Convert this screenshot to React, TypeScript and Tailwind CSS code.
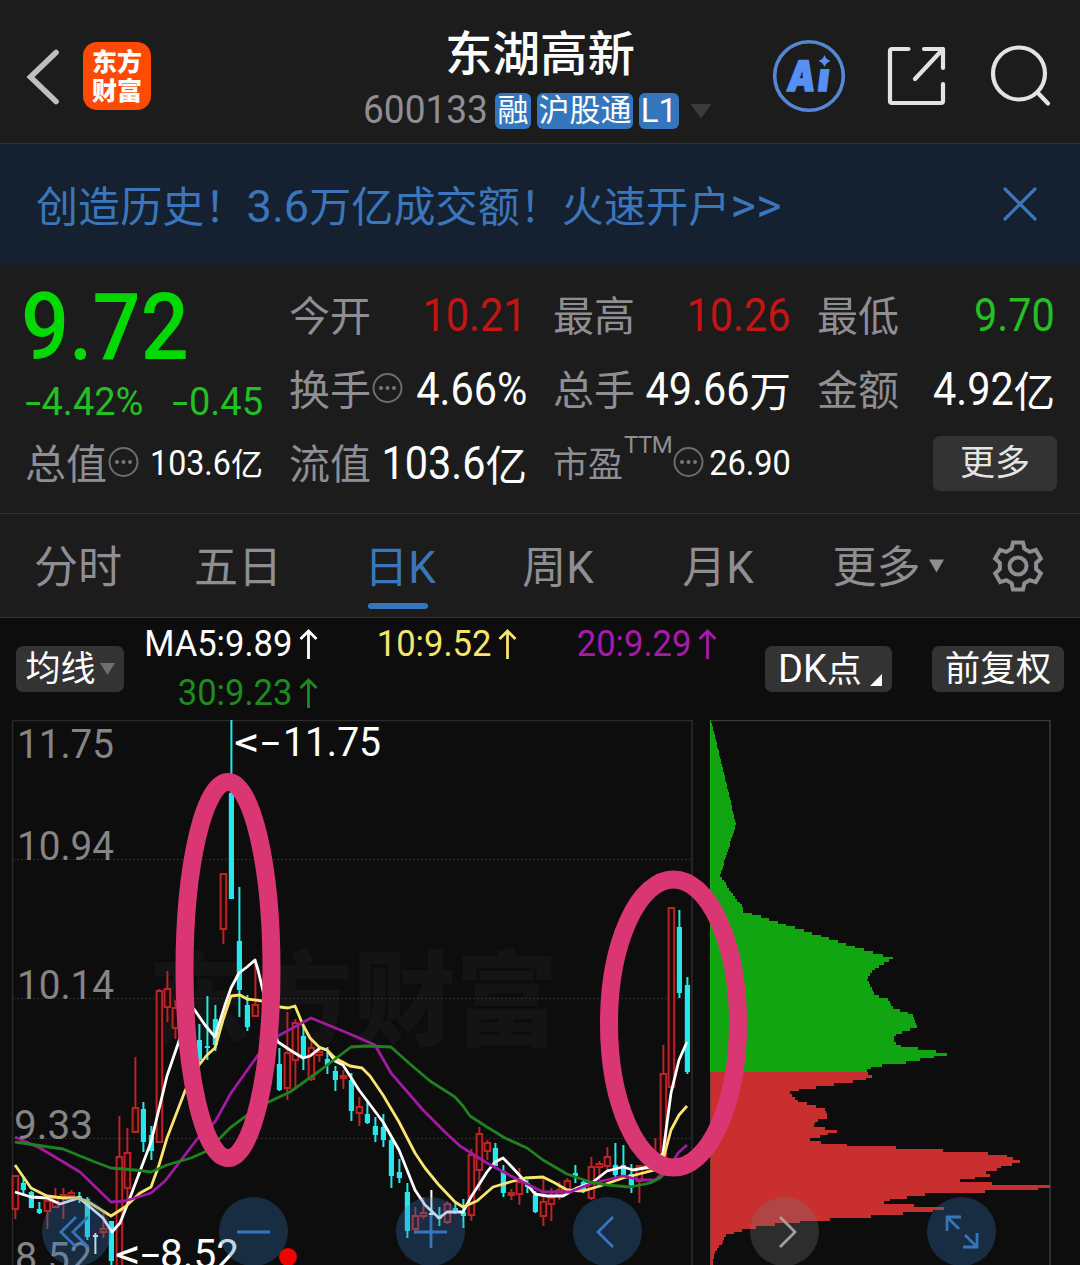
import type { ReactNode } from 'react';

type Point = [number, number];
// kind: r = rising (hollow red), c = falling (solid cyan), w = flat
type Candle = [i: number, kind: 'r' | 'c' | 'w', high: number, top: number, bottom: number, low: number];

const candles: Candle[] = [
  [0, 'r', 1175, 1176, 1209, 1219], [1, 'c', 1177, 1183, 1190, 1196], [2, 'c', 1191, 1192, 1208, 1208],
  [3, 'c', 1202, 1209, 1213, 1214], [4, 'r', 1200, 1201, 1211, 1229], [5, 'r', 1188, 1198, 1207, 1208],
  [6, 'r', 1188, 1195, 1197, 1219], [7, 'r', 1190, 1193, 1196, 1198], [8, 'c', 1192, 1196, 1199, 1203],
  [9, 'c', 1197, 1199, 1237, 1240], [10, 'w', 1233, 1235, 1237, 1254], [11, 'r', 1213, 1229, 1232, 1238],
  [12, 'c', 1221, 1221, 1261, 1266], [13, 'r', 1116, 1157, 1270, 1270], [14, 'r', 1128, 1153, 1188, 1205],
  [15, 'r', 1057, 1108, 1132, 1133], [16, 'c', 1102, 1109, 1142, 1152], [17, 'c', 1126, 1135, 1151, 1160],
  [18, 'r', 989, 991, 1142, 1142], [19, 'r', 971, 989, 1007, 1022], [20, 'r', 1000, 1008, 1028, 1039],
  [23, 'c', 1024, 1040, 1060, 1065], [24, 'c', 996, 1046, 1048, 1060], [25, 'c', 1005, 1019, 1045, 1051],
  [26, 'r', 873, 874, 929, 944], [27, 'c', 720, 793, 899, 899], [28, 'c', 887, 941, 990, 1017],
  [29, 'c', 995, 1005, 1027, 1031], [30, 'r', 961, 1005, 1016, 1017], [33, 'c', 1048, 1064, 1090, 1091],
  [34, 'r', 1012, 1053, 1088, 1100], [35, 'r', 1019, 1023, 1060, 1089], [36, 'c', 1027, 1036, 1058, 1070],
  [37, 'r', 1040, 1048, 1079, 1081], [38, 'r', 1047, 1052, 1055, 1062], [39, 'c', 1047, 1059, 1065, 1074],
  [40, 'c', 1066, 1071, 1080, 1091], [41, 'r', 1070, 1076, 1078, 1089], [42, 'c', 1073, 1080, 1111, 1121],
  [43, 'r', 1097, 1107, 1113, 1126], [44, 'c', 1102, 1114, 1123, 1124], [45, 'c', 1117, 1126, 1135, 1142],
  [46, 'c', 1114, 1127, 1140, 1147], [47, 'c', 1138, 1140, 1176, 1188], [48, 'c', 1159, 1172, 1178, 1183],
  [49, 'c', 1183, 1192, 1231, 1238], [50, 'r', 1207, 1216, 1229, 1234], [51, 'r', 1197, 1213, 1216, 1219],
  [52, 'w', 1190, 1213, 1215, 1216], [53, 'c', 1207, 1216, 1219, 1226], [54, 'r', 1201, 1204, 1222, 1224],
  [55, 'c', 1201, 1208, 1212, 1214], [56, 'c', 1199, 1212, 1216, 1228], [57, 'r', 1149, 1155, 1215, 1221],
  [58, 'r', 1127, 1134, 1170, 1191], [59, 'r', 1140, 1143, 1151, 1160], [60, 'c', 1143, 1148, 1166, 1166],
  [61, 'c', 1165, 1171, 1193, 1197], [62, 'r', 1189, 1193, 1195, 1200], [63, 'r', 1168, 1182, 1194, 1205],
  [64, 'c', 1180, 1183, 1187, 1193], [65, 'c', 1191, 1195, 1212, 1213], [66, 'r', 1179, 1202, 1216, 1226],
  [67, 'r', 1188, 1198, 1204, 1221], [68, 'r', 1182, 1190, 1195, 1200], [69, 'r', 1178, 1181, 1189, 1193],
  [70, 'c', 1165, 1173, 1176, 1183], [71, 'c', 1180, 1182, 1190, 1193], [72, 'r', 1157, 1167, 1198, 1200],
  [73, 'r', 1161, 1164, 1167, 1180], [74, 'r', 1147, 1157, 1166, 1172], [75, 'c', 1143, 1165, 1175, 1177],
  [76, 'c', 1145, 1165, 1175, 1177], [77, 'c', 1164, 1174, 1185, 1193], [78, 'r', 1165, 1166, 1181, 1203],
  [79, 'r', 1164, 1166, 1169, 1172], [80, 'r', 1138, 1163, 1167, 1168], [81, 'r', 1045, 1074, 1160, 1160],
  [82, 'r', 907, 908, 1087, 1088], [83, 'c', 910, 927, 993, 998], [84, 'c', 977, 985, 1072, 1074],
];

const ma5 =
  '15,1192 31,1197 47,1198 60,1204 79,1198 90,1207 103,1218 112,1232 120,1223 128,1203 151,1142 167,1076 180,1038 194,1009 205,1025 215,1037 225,1005 231,988 239,973 247,967 255,960 258,970 270,1020 278,1042 290,1050 303,1058 310,1056 320,1048 327,1050 335,1061 343,1065 359,1090 383,1122 399,1150 415,1190 425,1205 439,1218 447,1212 463,1212 471,1197 480,1183 487,1172 495,1162 503,1158 510,1165 522,1178 535,1194 547,1196 563,1196 577,1188 593,1182 607,1171 623,1167 633,1170 655,1166 663,1153 671,1093 679,1060 687,1042';
const ma10 =
  '15,1165 31,1188 47,1196 63,1198 79,1198 90,1203 111,1216 125,1207 140,1193 151,1187 159,1165 167,1138 185,1091 199,1065 207,1055 215,1048 223,1020 231,996 240,995 247,999 262,1001 280,1007 288,1008 295,1006 303,1025 310,1038 319,1047 327,1050 335,1058 350,1066 362,1068 370,1076 383,1095 399,1122 415,1153 425,1168 438,1184 455,1202 463,1207 477,1201 493,1187 510,1182 525,1178 543,1177 555,1183 567,1190 583,1191 600,1186 623,1178 655,1170 663,1160 671,1130 679,1115 687,1106';
const ma20 =
  '15,1137 40,1148 80,1172 111,1202 125,1201 151,1193 165,1181 198,1138 215,1122 231,1093 258,1055 278,1036 311,1018 350,1034 375,1045 391,1073 423,1110 447,1134 460,1146 487,1163 511,1176 543,1192 570,1192 590,1184 623,1176 640,1180 655,1180 670,1167 678,1153 687,1145';
const ma30 =
  '15,1142 63,1149 95,1162 111,1168 135,1170 151,1172 167,1165 191,1158 207,1151 231,1127 258,1107 290,1092 318,1072 351,1047 367,1046 391,1047 410,1064 430,1081 455,1097 463,1106 470,1116 487,1127 505,1138 527,1148 543,1160 567,1174 590,1182 607,1185 630,1187 650,1183 660,1178 666,1172';

// cost distribution: [y, right edge]
const chips: Point[] = [
  [720, 711], [824, 736], [876, 720], [880, 723], [900, 737], [905, 742], [911, 743], [943, 843], [948, 858],
  [958, 893], [970, 873], [979, 867], [995, 875], [999, 888], [1008, 893], [1014, 912], [1027, 917], [1033, 900],
  [1036, 894], [1042, 894], [1047, 903], [1050, 930], [1054, 948], [1061, 913], [1063, 903], [1066, 873],
  [1071, 867], [1073, 867], [1077, 874], [1081, 857], [1089, 803], [1092, 789], [1101, 798], [1109, 825],
  [1117, 828], [1121, 815], [1126, 814], [1131, 837], [1136, 822], [1140, 808], [1144, 832], [1149, 920],
  [1154, 1002], [1163, 1024], [1165, 1003], [1170, 997], [1172, 984], [1174, 996], [1182, 953], [1184, 1010],
  [1185.5, 1050], [1188.2, 1050], [1191, 1000], [1194, 927], [1202, 877], [1209, 954], [1216, 877],
  [1220, 817], [1226, 763], [1230, 742], [1236, 725], [1242, 723], [1252, 715], [1266, 712],
];

const CLOSE_Y = 1072;
const BAR = 2.75;

function chipWidth(y: number) {
  const n = chips.findIndex(([cy]) => cy > y);
  if (n < 1) return 1;
  const [y0, x0] = chips[n - 1];
  const [y1, x1] = chips[n];
  return Math.min(x0 + ((x1 - x0) * (y - y0)) / (y1 - y0), 1050) - 711;
}

const chipBars = Array.from({ length: 199 }, (_, i) => {
  const y = 720 + i * BAR;
  return { y, w: chipWidth(y + BAR / 2) };
});

// six-tooth gear outline, one tooth rotated round the centre
const gearPoints = Array.from({ length: 6 }, (_, k) => {
  const a = (k * Math.PI) / 3;
  const tooth: Point[] = [[-6.4, -17.2], [-5, -23.5], [5, -23.5], [6.4, -17.2]];
  return tooth
    .map(([x, y]) => `${(x * Math.cos(a) - y * Math.sin(a)).toFixed(2)},${(x * Math.sin(a) + y * Math.cos(a)).toFixed(2)}`)
    .join(' ');
}).join(' ');

function Dots() {
  return (
    <svg className="w-8 h-8 shrink-0" viewBox="0 0 32 32" fill="none">
      <circle cx="16.5" cy="15" r="14" stroke="#6d6d6f" strokeWidth="2" />
      <circle cx="10" cy="15" r="2" fill="#77777a" />
      <circle cx="16.5" cy="15" r="2" fill="#77777a" />
      <circle cx="23" cy="15" r="2" fill="#77777a" />
    </svg>
  );
}

function Stat({ label, info, children }: { label: string; info?: boolean; children: ReactNode }) {
  return (
    <div className="flex h-[74px] items-center justify-between whitespace-nowrap">
      <span className="flex items-center text-[41px] text-[#8e8e93]">
        <span className="pt-[5px]">{label}</span>
        {info && <Dots />}
      </span>
      {children}
    </div>
  );
}

function Value({ num, unit, color = 'text-white' }: { num: string; unit?: string; color?: string }) {
  return (
    <span className={`text-[46px] ${color}`}>
      <span className="-ml-4 inline-block origin-right scale-x-90">{num}</span>
      {unit && <span className="inline-block translate-y-0.5 text-[41.5px]">{unit}</span>}
    </span>
  );
}

function Change({ value }: { value: string }) {
  return (
    <span className="flex items-center">
      <span className="mx-[3px] inline-block scale-x-150">-</span>
      <span className="inline-block">{value}</span>
    </span>
  );
}

function Header() {
  return (
    <header className="flex h-[144px] shrink-0 items-center border-b border-[#333435] pl-[26px] pr-[28px]">
      <svg className="mt-[10px] h-[58px] w-[34px]" viewBox="0 0 34 58" fill="none">
        <path d="M30 4.5 L4.5 29 L30 53.5" stroke="#bfbfbf" strokeWidth="5.6" strokeLinecap="round" />
      </svg>
      <div className="ml-[23px] mt-[9px] flex h-[68px] w-[68px] flex-col items-center justify-center rounded-[14px] bg-[#ff4a03] pt-0.5 text-[25px] font-black leading-[29px] text-white">
        <span>东方</span>
        <span>财富</span>
      </div>
      <div className="ml-[212px] mt-[19px] flex flex-col">
        <h1 className="self-start pl-[82px] text-[47.5px] font-medium text-white">东湖高新</h1>
        <div className="mt-3 flex items-center">
          <span className="w-[132px] text-[39px] text-[#8e8e93]">
            <span className="inline-block origin-left scale-x-[0.95]">600133</span>
          </span>
          <div className="flex gap-[6px] text-[31px] text-white">
            <span className="flex h-9 w-9 items-center justify-center rounded-[6px] bg-[#3476bd]">融</span>
            <span className="flex h-9 w-24 items-center justify-center rounded-[6px] bg-[#3476bd]">沪股通</span>
            <span className="flex h-9 w-10 items-center justify-center rounded-[6px] bg-[#3476bd] text-[33px]">L1</span>
          </div>
          <svg className="ml-[11px] h-4 w-[22px]" viewBox="0 0 22 16">
            <path d="M0.5 1 H21.5 L11 15.5 Z" fill="#3b3b3b" />
          </svg>
        </div>
      </div>
      <div className="ml-auto mt-[9px] flex items-center">
        <svg className="h-[76px] w-[74px]" viewBox="0 0 74 76" fill="none">
          <circle cx="37" cy="38" r="34.3" stroke="#5487d3" strokeWidth="3.6" />
          <g transform="translate(14 52.5) skewX(-7)" className="font-['Inter']" fontWeight="900" fill="#5590f2" stroke="#5590f2" strokeWidth="1.4">
            <text fontSize="42" textLength="28" lengthAdjust="spacingAndGlyphs">A</text>
            <text x="30.5" fontSize="39">ı</text>
          </g>
          <path d="M52.5 17 Q54 21.5 58.5 23 Q54 24.5 52.5 29 Q51 24.5 46.5 23 Q51 21.5 52.5 17Z" fill="#5590f2" />
        </svg>
        <svg
          className="ml-[41px] h-[60px] w-[60px]"
          viewBox="0 0 60 60"
          fill="none"
          stroke="#e3e3e3"
          strokeWidth="4.2"
          strokeLinecap="round"
          strokeLinejoin="round"
        >
          <path d="M21.5 3 H5 Q3 3 3 5 V55 Q3 57 5 57 H54 Q56 57 56 55 V38" />
          <path d="M37 3 H56 V22 M56 3 L28 33" />
        </svg>
        <svg className="ml-[43px] h-[62px] w-[62px]" viewBox="0 0 62 62" fill="none" stroke="#e3e3e3" strokeWidth="4.2" strokeLinecap="round">
          <circle cx="29" cy="28.5" r="26" />
          <path d="M48 48 L58 58.5" />
        </svg>
      </div>
    </header>
  );
}

function Banner() {
  return (
    <div className="flex h-[120px] shrink-0 items-center justify-between bg-[#152130] pl-9 pr-[43px] text-[#3b76ba]">
      <p className="whitespace-nowrap pt-0.5 text-[42px] tracking-[0.1px]">
        创造历史！<span className="text-[45px]">3.6</span>万亿成交额！火速开户
        <span className="text-[49px]">&gt;&gt;</span>
      </p>
      <svg className="h-[34px] w-[34px]" viewBox="0 0 34 34" stroke="currentColor" strokeWidth="3.2" strokeLinecap="round">
        <path d="M2 2 L32 32 M32 2 L2 32" />
      </svg>
    </div>
  );
}

function Quote() {
  return (
    <section className="grid h-[250px] shrink-0 grid-cols-4 gap-x-[26px] border-b border-[#333435] px-[25px] pt-[14px]">
      <div>
        <div className="flex h-[148px] flex-col">
          <span className="-ml-1 mt-[4px] origin-left scale-x-[0.92] text-[92px] font-medium text-[#03d803]">9.72</span>
          <div className="mt-[9px] flex justify-between text-[38px] text-[#23c023]">
            <Change value="4.42%" />
            <Change value="0.45" />
          </div>
        </div>
        <Stat label="总值" info>
          <span className="text-[35px] text-white">
            <span className="inline-block origin-right scale-x-[0.92]">103.6</span>
            <span className="inline-block translate-y-px text-[32px]">亿</span>
          </span>
        </Stat>
      </div>
      <div>
        <Stat label="今开">
          <Value num="10.21" color="text-[#c41414]" />
        </Stat>
        <Stat label="换手" info>
          <Value num="4.66%" />
        </Stat>
        <Stat label="流值">
          <Value num="103.6" unit="亿" />
        </Stat>
      </div>
      <div>
        <Stat label="最高">
          <Value num="10.26" color="text-[#c41414]" />
        </Stat>
        <Stat label="总手">
          <Value num="49.66" unit="万" />
        </Stat>
        <div className="flex h-[74px] items-center justify-between whitespace-nowrap text-[#8e8e93]">
          <span className="flex items-center">
            <span className="pt-[5px] text-[35px]">市盈</span>
            <span className="mb-9 ml-px text-[24px] tracking-[-0.5px]">TTM</span>
            <Dots />
          </span>
          <span className="-ml-2 inline-block origin-right scale-x-[0.93] text-[35px] text-white">26.90</span>
        </div>
      </div>
      <div>
        <Stat label="最低">
          <Value num="9.70" color="text-[#23c023]" />
        </Stat>
        <Stat label="金额">
          <Value num="4.92" unit="亿" />
        </Stat>
        <div className="-mr-0.5 flex h-[74px] items-center justify-end">
          <button className="h-[55px] w-[124px] rounded-[7px] bg-[#333333] text-[35px] text-[#e4e4e4]">更多</button>
        </div>
      </div>
    </section>
  );
}

const tabs = ['分时', '五日', '日K', '周K', '月K'];

function Tabs() {
  return (
    <nav className="flex h-[104px] shrink-0 items-center border-b border-[#333435] text-[44px] text-[#8e8e93]">
      {tabs.map((tab) => (
        <div
          key={tab}
          className={
            tab === '日K'
              ? 'relative flex h-full w-40 items-center justify-center pt-1 text-[#3b76ba]'
              : 'flex h-full w-40 items-center justify-center pr-1 pt-1'
          }
        >
          {tab}
          {tab === '日K' && <span className="absolute bottom-2 left-12 h-1.5 w-[60px] rounded-full bg-[#3476bd]" />}
        </div>
      ))}
      <div className="flex w-[176px] items-center justify-center gap-2">
        <span className="pt-1">更多</span>
        <svg className="h-[14px] w-[15px]" viewBox="0 0 15 14">
          <path d="M0 0.5 H15 L7.5 13.5 Z" fill="#8e8e93" />
        </svg>
      </div>
      <svg className="ml-[14px] h-[56px] w-[56px]" viewBox="-28 -28 56 56" fill="none" stroke="#8e8e93" strokeWidth="4">
        <polygon points={gearPoints} />
        <circle r="8.5" />
      </svg>
    </nav>
  );
}

function Average({ text, color }: { text: string; color: string }) {
  return (
    <span className={`flex items-center justify-end gap-[7px] text-[36px] ${color}`}>
      <span className="inline-block origin-right scale-x-[0.96]">{text}</span>
      <svg className="h-8 w-[19px]" viewBox="0 0 19 32" fill="none" stroke="currentColor" strokeWidth="2.8">
        <path d="M9.5 31 V3 M1.5 11 L9.5 3 L17.5 11" />
      </svg>
    </span>
  );
}

function Legend() {
  return (
    <div className="flex h-[102px] shrink-0 pl-4 pr-4">
      <button className="mt-7 flex h-[46px] w-[108px] items-center justify-center gap-1 rounded-[7px] bg-[#333333] text-[35px] text-white">
        <span className="pt-px">均线</span>
        <svg className="h-3 w-[15px]" viewBox="0 0 15 12">
          <path d="M0 0 H15 L7.5 12 Z" fill="#6f6f6f" />
        </svg>
      </button>
      <div className="grid w-[594px] grid-cols-[194px_199px_200px] grid-rows-[52px_46px] whitespace-nowrap">
        <Average text="MA5:9.89" color="text-white" />
        <Average text="10:9.52" color="text-[#f6e46f]" />
        <Average text="20:9.29" color="text-[#a81aa8]" />
        <Average text="30:9.23" color="text-[#1f8a1f]" />
      </div>
      <button className="ml-auto mt-7 flex h-[46px] w-[127px] items-center rounded-[7px] bg-[#333333] pl-[13px] text-[35px] text-white">
        <span className="text-[38px]">DK</span>
        <span className="pt-0.5">点</span>
        <svg className="ml-[8px] mt-[22px] h-3 w-3" viewBox="0 0 12 12">
          <path d="M12 0 V12 H0 Z" fill="#fff" />
        </svg>
      </button>
      <button className="ml-10 mt-7 h-[46px] w-[132px] rounded-[7px] bg-[#333333] pt-0.5 text-[35.5px] text-white">前复权</button>
    </div>
  );
}

function ChartText({ x, y, w, fill, children }: { x: number; y: number; w: number; fill: string; children: string }) {
  return (
    <text x={x} y={y} fontSize="40" fill={fill} textLength={w} lengthAdjust="spacingAndGlyphs">
      {children}
    </text>
  );
}

function CandleMark({ c }: { c: Candle }) {
  const [i, kind, high, top, bottom, low] = c;
  const x = 15.4 + i * 8;
  if (kind === 'r') {
    return (
      <g stroke="#b92525" strokeWidth="2">
        <path d={`M${x} ${high} V${top} M${x} ${bottom} V${low}`} />
        <rect x={x - 2.8} y={top} width="5.6" height={Math.max(bottom - top, 1)} fill="#2a0505" />
      </g>
    );
  }
  const color = kind === 'c' ? '#26e8e8' : '#ffffff';
  return (
    <g fill={color}>
      <rect x={x - 1} y={high} width="2" height={low - high} />
      <rect x={x - 2.6} y={top} width="5.2" height={bottom - top} />
    </g>
  );
}

function Chart() {
  return (
    <svg className="block h-[545px] w-[1080px]" viewBox="0 720 1080 545" fill="none">
      <text
        x="148"
        y="1038"
        fontSize="103"
        fontWeight="900"
        fill="#141414"
        textLength="410"
        lengthAdjust="spacingAndGlyphs"
      >
        东方财富
      </text>
      <path d="M12.5 1265 V720.5 H692 V1265" stroke="#2b2b2b" strokeWidth="1.5" />
      <path d="M711 720.5 H1050 V1265" stroke="#3a3a3a" strokeWidth="1.5" />
      <path d="M13 859.5 H692 M13 998.5 H692 M13 1138.5 H692" stroke="#2e2e2e" strokeDasharray="2 2" />

      <g shapeRendering="crispEdges">
        {chipBars.map(({ y, w }) => (
          <rect key={y} x="711" y={y} width={w} height={BAR} fill={y < CLOSE_Y - 1 ? '#12a512' : '#ca2f2f'} />
        ))}
      </g>
      <path d="M710.5 720 V1072" stroke="#14b414" />
      <path d="M710.5 1072 V1265" stroke="#8d3a32" />

      {candles.map((c) => (
        <CandleMark key={c[0]} c={c} />
      ))}
      <g strokeWidth="2.8" strokeLinejoin="round">
        <polyline points={ma5} stroke="#ffffff" />
        <polyline points={ma10} stroke="#fbe56f" />
        <polyline points={ma20} stroke="#a11aa1" />
        <polyline points={ma30} stroke="#1f821f" />
      </g>

      <ChartText x={17} y={758} w={97} fill="#858585">11.75</ChartText>
      <ChartText x={17} y={860} w={97} fill="#858585">10.94</ChartText>
      <ChartText x={17} y={999} w={97} fill="#858585">10.14</ChartText>
      <ChartText x={14} y={1139} w={79} fill="#858585">9.33</ChartText>
      <ChartText x={15} y={1271} w={77} fill="#858585">8.52</ChartText>
      <ChartText x={234} y={756} w={26} fill="#ffffff">{'<'}</ChartText>
      <ChartText x={261} y={756} w={19} fill="#ffffff">-</ChartText>
      <ChartText x={283} y={756} w={98} fill="#ffffff">11.75</ChartText>
      <ChartText x={115} y={1268} w={26} fill="#ffffff">{'<'}</ChartText>
      <ChartText x={141} y={1268} w={19} fill="#ffffff">-</ChartText>
      <ChartText x={160} y={1268} w={79} fill="#ffffff">8.52</ChartText>

      <circle cx="288" cy="1257" r="9" fill="#ee0202" />
      <ellipse cx="228" cy="970" rx="43.5" ry="188" stroke="#db3674" strokeWidth="18" />
      <ellipse cx="673.5" cy="1023.5" rx="64.5" ry="144" stroke="#db3674" strokeWidth="18" />
    </svg>
  );
}

const controls = [
  'M24 -15 L9 0 L24 15 M12 -15 L-3 0 L12 15',
  'M-17 0 H16',
  'M-17 0 H16 M0 -17 V16',
  'M5 -15 L-10 0 L5 15',
  'M-5 -15 L10 0 L-5 15',
  'M-15 -1 V-15 H-1 M-15 -15 L-3 -3 M3 3 L15 15 M15 1 V15 H1',
];

function Controls() {
  return (
    <div className="absolute bottom-[-1px] left-[42px] flex gap-[108px]">
      {controls.map((d, i) => (
        <button
          key={d}
          className={
            i === 4
              ? 'flex h-[69px] w-[69px] items-center justify-center rounded-full bg-[#787878]/30 text-[#a0a0a0]'
              : 'flex h-[69px] w-[69px] items-center justify-center rounded-full bg-[#3476bd]/30 text-[#3476bd]'
          }
        >
          <svg className="h-[50px] w-[50px]" viewBox="-25 -25 50 50" fill="none" stroke="currentColor" strokeWidth="2.8">
            <path d={d} transform={i === 0 ? 'translate(-13 0)' : undefined} />
          </svg>
        </button>
      ))}
    </div>
  );
}

export default function App() {
  return (
    <div className="flex h-[1265px] w-[1080px] flex-col overflow-hidden bg-[#1c1c1c] font-['Roboto','Noto_Sans_CJK_SC',sans-serif] leading-none">
      <Header />
      <Banner />
      <Quote />
      <Tabs />
      <main className="relative h-[647px] bg-[#0d0d0d]">
        <Legend />
        <Chart />
        <Controls />
      </main>
    </div>
  );
}
